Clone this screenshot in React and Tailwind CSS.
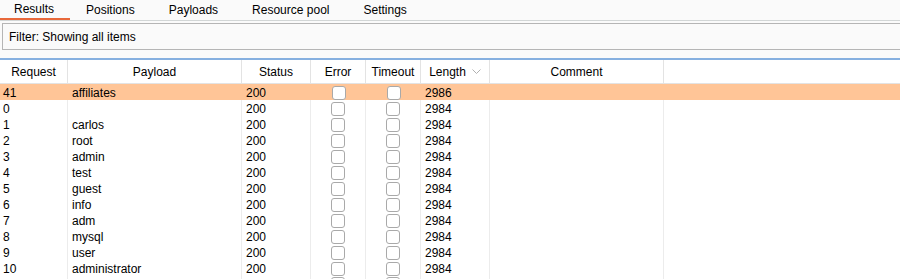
import React from "react";

const tabs = ["Results", "Positions", "Payloads", "Resource pool", "Settings"];

const rows = [
  { req: "41", payload: "affiliates", status: "200", length: "2986", hl: true },
  { req: "0", payload: "", status: "200", length: "2984" },
  { req: "1", payload: "carlos", status: "200", length: "2984" },
  { req: "2", payload: "root", status: "200", length: "2984" },
  { req: "3", payload: "admin", status: "200", length: "2984" },
  { req: "4", payload: "test", status: "200", length: "2984" },
  { req: "5", payload: "guest", status: "200", length: "2984" },
  { req: "6", payload: "info", status: "200", length: "2984" },
  { req: "7", payload: "adm", status: "200", length: "2984" },
  { req: "8", payload: "mysql", status: "200", length: "2984" },
  { req: "9", payload: "user", status: "200", length: "2984" },
  { req: "10", payload: "administrator", status: "200", length: "2984" },
  // next row is scrolled mostly out of view, only the checkbox tops show
  { req: "", payload: "", status: "", length: "", key: "partial" },
];

const cols = "grid grid-cols-[68px_174px_69px_55px_55px_69px_174px]";

const Checkbox = () => (
  <div className="w-[14px] h-[14px] rounded-[3px] border border-[#a9a9a9] bg-white" />
);

const App = () => {
  return (
    <div
      className="w-[900px] h-[279px] overflow-hidden bg-[#fafafa] text-[12px] text-black"
      style={{ fontFamily: '"Liberation Sans", Arial, sans-serif' }}
    >
      <div className="flex h-[21px] border-b border-[#d2d6d6]">
        {tabs.map((t, i) => (
          <div
            key={t}
            className={
              i === 0
                ? "pl-[14px] pr-[16px] h-full flex items-center border-b-2 border-[#e8683a]"
                : "pl-[16px] pr-[18px] h-full flex items-center"
            }
          >
            {t}
          </div>
        ))}
      </div>

      <div className="pt-[2px] pl-[2px]">
        <div className="h-[27px] border-y border-l border-[#b5b5b5] flex items-center pl-[6px] bg-[#fafafa]">
          Filter: Showing all items
        </div>
      </div>

      <div className="mt-[8px] bg-white border-t-2 border-[#86b0e0]">
        <div className={`${cols} h-[24px] border-b border-[#e3e3e3]`}>
          {["Request", "Payload", "Status", "Error", "Timeout"].map((h) => (
            <div key={h} className="flex items-center justify-center border-r border-[#e3e3e3]">
              {h}
            </div>
          ))}
          <div className="flex items-center justify-center gap-[6px] border-r border-[#e3e3e3]">
            Length
            <svg width="9" height="6" viewBox="0 0 9 6" className="mt-[1px]">
              <path d="M0.5 0.5 L4.5 4.5 L8.5 0.5" fill="none" stroke="#b0b0b0" strokeWidth="1" />
            </svg>
          </div>
          <div className="flex items-center justify-center border-r border-[#e3e3e3]">Comment</div>
        </div>

        {rows.map((r) => {
          const line = r.hl ? "" : "border-r border-[#ececec]";
          return (
            <div
              key={r.key || r.req}
              className={`${cols} h-[16px] ${r.hl ? "bg-[#ffc597]" : ""}`}
            >
              <div className={`pl-[3px] flex items-center ${line}`}>{r.req}</div>
              <div className={`pl-[4px] flex items-center ${line}`}>{r.payload}</div>
              <div className={`pl-[4px] flex items-center ${line}`}>{r.status}</div>
              <div className={`flex items-center justify-center ${line}`}>
                <Checkbox />
              </div>
              <div className={`flex items-center justify-center ${line}`}>
                <Checkbox />
              </div>
              <div className={`pl-[4px] flex items-center ${line}`}>{r.length}</div>
              <div className={`flex items-center ${line}`} />
            </div>
          );
        })}
      </div>
    </div>
  );
};

export default App;
